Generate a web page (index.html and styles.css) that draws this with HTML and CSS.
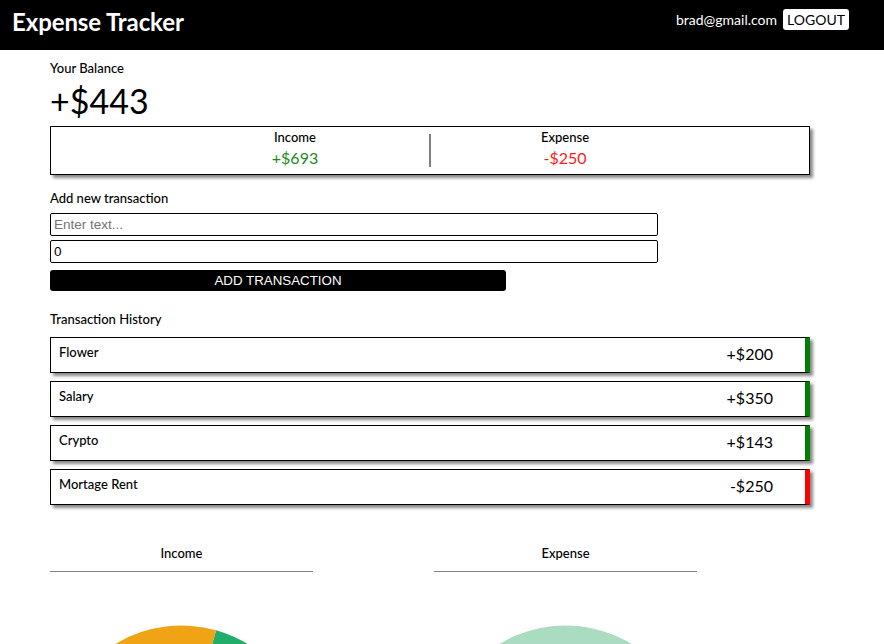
FILE: index.html
```html
<!DOCTYPE html>
<html lang="en">
<head>
<meta charset="utf-8">
<title>Expense Tracker</title>
<link rel="stylesheet" href="styles.css">
</head>
<body>
<header class="topbar">
  <h1 class="brand">Expense Tracker</h1>
  <div class="user">
    <span class="email">brad@gmail.com</span>
    <button class="logout">LOGOUT</button>
  </div>
</header>
<main class="container">
  <h4 class="label">Your Balance</h4>
  <h1 class="balance">+$443</h1>

  <div class="inc-exp">
    <div class="col">
      <h4 class="col-title">Income</h4>
      <p class="money plus">+$693</p>
    </div>
    <div class="divider"></div>
    <div class="col">
      <h4 class="col-title">Expense</h4>
      <p class="money minus">-$250</p>
    </div>
  </div>

  <h4 class="label section">Add new transaction</h4>
  <form class="form">
    <input class="field" type="text" placeholder="Enter text...">
    <input class="field" type="number" value="0">
    <button class="add-btn" type="button">ADD TRANSACTION</button>
  </form>

  <h4 class="label section history">Transaction History</h4>
  <ul class="list">
    <li class="item plus-item"><span class="name">Flower</span><span class="amt">+$200</span></li>
    <li class="item plus-item"><span class="name">Salary</span><span class="amt">+$350</span></li>
    <li class="item plus-item"><span class="name">Crypto</span><span class="amt">+$143</span></li>
    <li class="item minus-item"><span class="name">Mortage Rent</span><span class="amt">-$250</span></li>
  </ul>

  <div class="charts">
    <div class="chart">
      <h4 class="chart-title">Income</h4>
      <svg class="pie" width="263" height="263" viewBox="0 0 263 263">
        <path d="M131.5 131.5 L259.5 131.5 A128 128 0 0 0 166.1 8.3 Z" fill="#22ad6b"/>
        <path d="M131.5 131.5 L166.1 8.3 A128 128 0 1 0 100.8 255.8 Z" fill="#f0a314"/>
        <path d="M131.5 131.5 L100.8 255.8 A128 128 0 0 0 259.5 131.5 Z" fill="#3b7dd8"/>
      </svg>
    </div>
    <div class="chart">
      <h4 class="chart-title">Expense</h4>
      <svg class="pie" width="263" height="263" viewBox="0 0 263 263">
        <circle cx="131.5" cy="131.5" r="128" fill="#aadcc1"/>
      </svg>
    </div>
  </div>
</main>
</body>
</html>
```
FILE: styles.css
```css
* { box-sizing: border-box; }

body {
  margin: 0;
  font-family: "Lato", "Noto Sans", sans-serif;
  color: #000;
  background: #fff;
}

.topbar {
  height: 50px;
  background: #000;
  color: #fff;
  display: flex;
  align-items: center;
  justify-content: space-between;
  padding: 0 35px 0 12px;
}

.brand {
  margin: 0 0 8px;
  font-size: 24px;
  font-weight: 700;
  letter-spacing: -0.1px;
}

.user {
  display: flex;
  align-items: center;
  gap: 6px;
  margin-bottom: 12px;
}

.email {
  font-size: 14px;
}

.logout {
  font-family: "Lato", sans-serif;
  font-size: 14px;
  background: #fff;
  color: #000;
  border: none;
  border-radius: 3px;
  padding: 1px 4px;
  line-height: 19px;
}

.container {
  width: 760px;
  margin-left: 50px;
  padding-top: 9px;
}

.label {
  margin: 0;
  font-size: 13px;
  font-weight: 500;
  line-height: 18px;
}

.balance {
  margin: 4px 0 5px;
  font-size: 34px;
  font-weight: 400;
  line-height: 40px;
}

.inc-exp {
  border: 1px solid #000;
  box-shadow: 3px 3px 3px #888;
  height: 49px;
  display: flex;
  justify-content: center;
  align-items: center;
}

.col {
  width: 268px;
  text-align: center;
  align-self: flex-start;
  padding-top: 2px;
}

.col-title {
  margin: 0;
  font-size: 13px;
  font-weight: 500;
  line-height: 16px;
}

.money {
  margin: 3px 0 0;
  font-size: 16px;
  line-height: 20px;
}

.plus { color: #228b22; }
.minus { color: #ff1a1a; }

.divider {
  width: 2px;
  height: 33px;
  background: #808080;
  margin-top: -1px;
}

.section {
  margin-top: 14px;
}

.form {
  margin: 6px 0 0;
  width: 608px;
  display: flex;
  flex-direction: column;
  gap: 4px;
}

.field {
  height: 23px;
  border: 1px solid #000;
  border-radius: 2px;
  padding: 0 3px;
  font-family: "Liberation Sans", Arial, sans-serif;
  font-size: 13.5px;
  margin: 0;
}

.field::placeholder { color: #757575; }

.add-btn {
  width: 456px;
  height: 21px;
  margin-top: 3px;
  background: #000;
  color: #fff;
  border: none;
  border-radius: 3px;
  font-family: "Liberation Sans", Arial, sans-serif;
  font-size: 13.33px;
  padding: 0;
}

.history {
  margin-top: 19px;
}

.list {
  list-style: none;
  margin: 9px 0 0;
  padding: 0;
  display: flex;
  flex-direction: column;
  gap: 8px;
}

.item {
  height: 36px;
  border: 1px solid #000;
  border-right: 5px solid #008000;
  box-shadow: 3px 3px 3px #888;
  display: flex;
  justify-content: space-between;
  padding: 0 32px 0 8px;
}

.minus-item { border-right-color: #ff0000; }

.name {
  font-size: 13px;
  font-weight: 500;
  padding-top: 6px;
}

.amt {
  font-size: 16px;
  padding-top: 6px;
}

.charts {
  margin-top: 39px;
  display: flex;
  gap: 121px;
}

.chart {
  width: 263px;
  display: flex;
  flex-direction: column;
  align-items: center;
}

.chart-title {
  width: 100%;
  margin: 0;
  text-align: center;
  font-size: 13px;
  font-weight: 500;
  line-height: 18px;
  padding-bottom: 9px;
  border-bottom: 1px solid #808080;
}

.pie {
  display: block;
  margin-top: 50px;
}
```
